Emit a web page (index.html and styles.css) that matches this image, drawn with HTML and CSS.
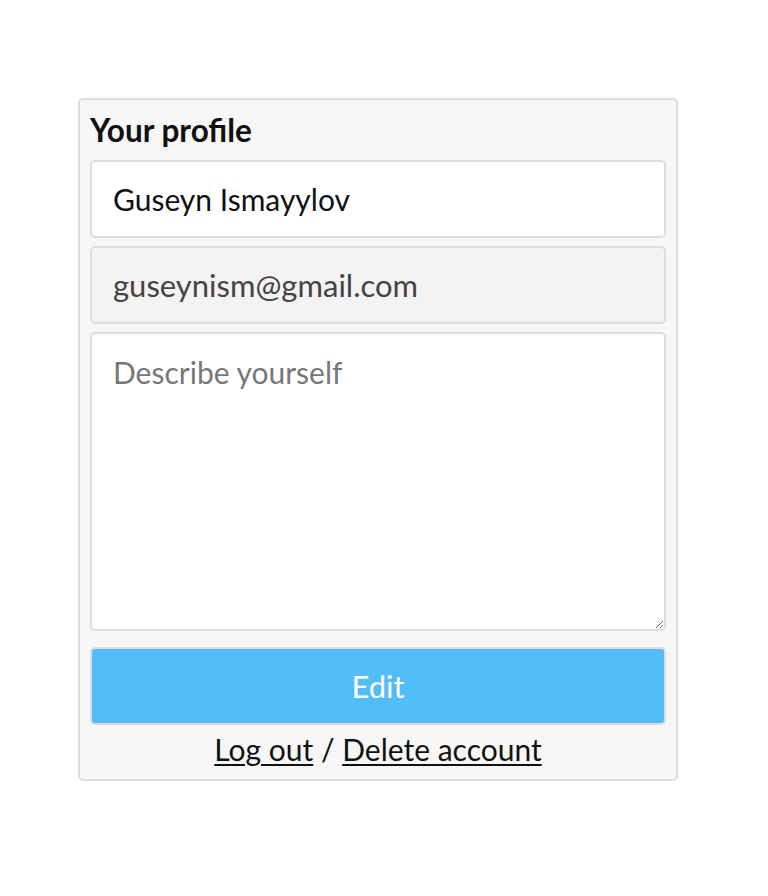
FILE: index.html
```html
<!DOCTYPE html>
<html>
<head>
<meta charset="utf-8">
<link rel="stylesheet" href="styles.css">
</head>
<body>
<div class="page">
  <form class="card">
    <div class="title">Your profile</div>
    <input class="field" type="text" value="Guseyn Ismayylov">
    <input class="field field-disabled" type="email" value="guseynism@gmail.com" readonly>
    <textarea class="field area" placeholder="Describe yourself"></textarea>
    <button class="btn" type="button">Edit</button>
    <div class="links"><a href="#">Log out</a> / <a href="#">Delete account</a></div>
  </form>
</div>
</body>
</html>
```
FILE: styles.css
```css
html, body {
  margin: 0;
  padding: 0;
  background: #fff;
}
.page {
  padding: 98px 0 0 78px;
  font-family: Lato, "Open Sans", sans-serif;
}
.card {
  box-sizing: border-box;
  width: 600px;
  height: 683px;
  border: 2px solid #dddddd;
  border-radius: 5px;
  background: #f7f7f7;
  padding: 10px;
  display: flex;
  flex-direction: column;
}
.title {
  font-weight: 700;
  font-size: 31.5px;
  line-height: 40px;
  height: 40px;
  color: #111;
  margin-bottom: 10px;
  flex: none;
}
.field {
  box-sizing: border-box;
  width: 100%;
  height: 78px;
  flex: none;
  border: 2px solid #dddddd;
  border-radius: 5px;
  background: #fff;
  padding: 0 21px;
  font-family: Lato, "Open Sans", sans-serif;
  font-size: 30px;
  color: #111;
  margin: 0 0 8px 0;
  outline: none;
}
.field-disabled {
  background: #f3f3f3;
  color: #444;
  font-size: 31px;
}
.area {
  height: 299px;
  padding: 20px 21px;
  resize: vertical;
  margin-bottom: 16px;
  line-height: 36px;
}
.area::placeholder {
  color: #777;
}
.btn {
  box-sizing: border-box;
  width: 100%;
  height: 78px;
  flex: none;
  border: 2px solid #dddddd;
  border-radius: 5px;
  background: #52bdf8;
  color: #fff;
  font-family: Lato, "Open Sans", sans-serif;
  font-size: 31px;
  padding: 0;
}
.links {
  text-align: center;
  font-size: 30px;
  line-height: 48px;
  height: 44px;
  color: #111;
}
.links a {
  color: #111;
  text-decoration: underline;
  text-underline-offset: 3px;
  text-decoration-thickness: 2px;
}
```
